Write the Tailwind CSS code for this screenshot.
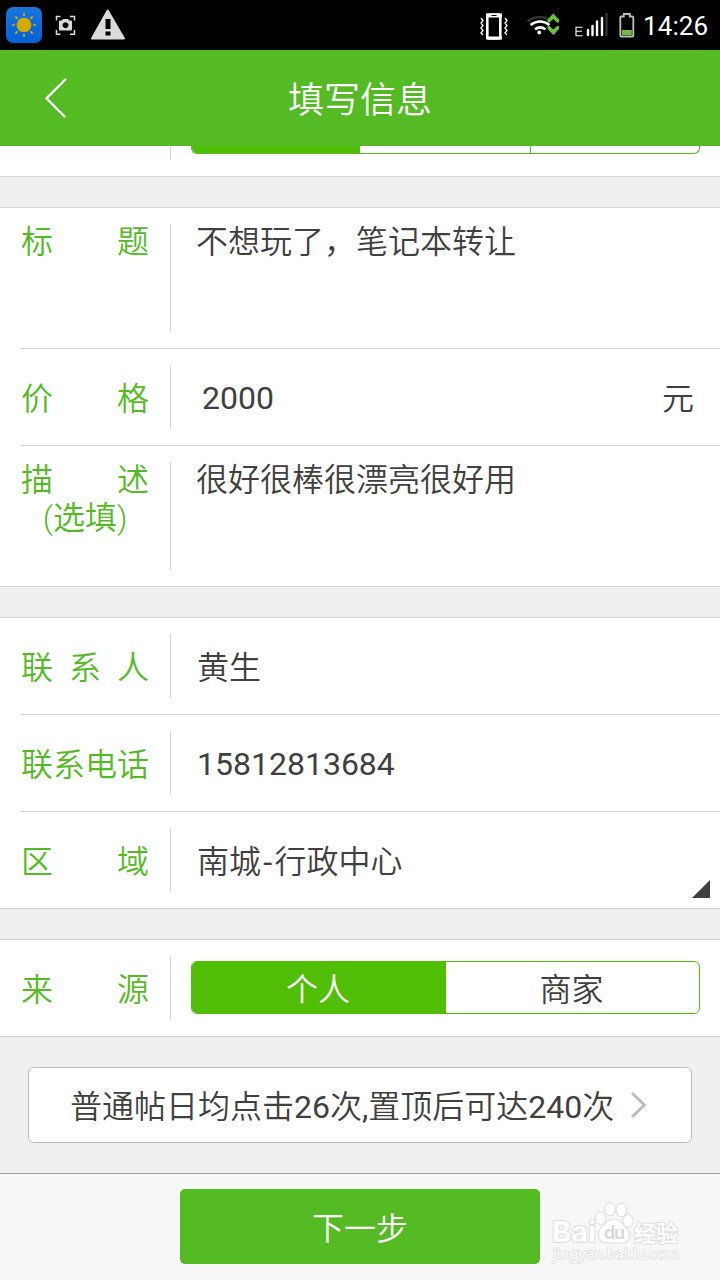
<!DOCTYPE html>
<html lang="zh-CN">
<head>
  <meta charset="UTF-8">
  <meta name="viewport" content="width=device-width, initial-scale=1">
  <title>填写信息</title>
  <script src="https://cdn.jsdelivr.net/npm/@tailwindcss/browser@4"></script>
</head>

<body class="w-[720px] h-[1280px] overflow-hidden flex flex-col bg-[#efefef] text-[#404040] text-[32px] leading-[38px] font-[350] font-[Roboto,'Noto_Sans_CJK_SC',sans-serif]">

<!-- Status Bar -->
<div class="h-[50px] shrink-0 bg-black flex items-center justify-between">
  <svg width="130" height="50" viewBox="0 0 130 50">
    <defs>
      <linearGradient id="sky" x1="0" y1="0" x2="0" y2="1">
        <stop offset="0" stop-color="#1a75dc"/>
        <stop offset="1" stop-color="#0062d8"/>
      </linearGradient>
    </defs>
    <rect x="6" y="7" width="36" height="36" rx="7" fill="url(#sky)"/>
    <circle cx="24" cy="25" r="7.3" fill="#d9a900"/>
    <path d="M24 13v3M24 34v3M12 25h3M33 25h3M15.3 16.3l2.4 2.4M30.3 31.3l2.4 2.4M15.3 33.7l2.4-2.4M30.3 18.7l2.4-2.4" stroke="#d9a900" stroke-width="1.7"/>
    <path d="M56.5 20.5v-4h4M70 16.5h4.5v4M74.500 30v4.200h-4.500M60.500 34.200h-4v-4.200" fill="none" stroke="#dadada" stroke-width="1.5"/>
    <path fill-rule="evenodd" d="M60 20.500h2l1-1.500h5l1 1.500h2q1 0 1 1v8q0 1-1 1h-11q-1 0-1-1v-8q0-1 1-1zM65.500 22.300a3 3 0 1 0 .01 0z" fill="#dadada"/>
    <path d="M107.700 10.500L124 38.500H92z" fill="#dadada" stroke="#dadada" stroke-width="2" stroke-linejoin="round"/>
    <path d="M105.500 19h5v10h-5zM105.500 31.500h5v4h-5z" fill="#000"/>
  </svg>
  <div class="flex items-center">
    <svg width="180" height="50" viewBox="0 0 180 50">
      <!-- vibrate -->
      <rect x="23.300" y="14.500" width="13" height="24" rx="1.500" fill="none" stroke="#fff" stroke-width="2.600"/>
      <path d="M22 13.500h16v4h-16zM22 36.500h16v3h-16z" fill="#fff"/>
      <path d="M27.500 15.500h5" stroke="#000" stroke-width="1"/>
      <path d="M17.500 18l2 2.500-2 2.500 2 2.500-2 2.500 2 2.500-2 2.500 2 2M41.500 18l2 2.500-2 2.500 2 2.500-2 2.500 2 2.500-2 2.500 2 2" transform="translate(-.5 0)" fill="none" stroke="#fff" stroke-width="1.300"/>
      <!-- wifi -->
      <path d="M63.500 21.500Q75 13.500 86 20" fill="none" stroke="#333" stroke-width="2.500"/>
      <path d="M66 25Q75.500 18 85 25M70.500 29.300Q75.500 25.500 81 29.300" transform="translate(.5 0)" fill="none" stroke="#fff" stroke-width="2.500"/>
      <circle cx="75.200" cy="32.500" r="1.900" fill="#fff"/>
      <path d="M83.500 22.500v-3l5.800-6 5.700 6v3h-2l-3.700-3.500-3.800 3.500zM83.500 26v3l5.800 6 5.700-6v-3h-2l-3.700 3.500-3.800-3.500z" fill="#6cc035"/>
      <!-- signal -->
      <path d="M118.500 27.200h-6.500v8.500h6.500M112 31.200h6" fill="none" stroke="#fff" stroke-width="1.100"/>
      <path d="M124 30v5M128.500 26v9M133 21.500v13.500M138 18v17" stroke="#fff" stroke-width="2.400" stroke-linecap="round"/>
      <path d="M142.500 13v23" stroke="#333" stroke-width="2.400"/>
      <!-- battery -->
      <path d="M156.500 17.500q0-1 1-1h2.500v-2.500h6v2.500h2.500q1 0 1 1v18q0 1-1 1h-11q-1 0-1-1z" transform="translate(-.2 0)" fill="none" stroke="#bdbdbd" stroke-width="1.800"/>
      <path d="M157.800 30h10v5h-10z" fill="#6cc035"/>
    </svg>
    <span class="w-[77px] -ml-[1px] pt-0.5 text-[26px] text-white tracking-[0.1px] font-normal">14:26</span>
  </div>
</div>

<!-- Header -->
<header class="h-24 shrink-0 bg-[#54bb24] text-white flex items-center">
  <svg class="w-[110px]" height="96" viewBox="0 0 110 96" fill="none" stroke="#fff" stroke-width="2.400" stroke-linecap="round">
    <path d="M65.300 29.500L46.500 48.300 64.500 66.500"/>
  </svg>
  <h1 class="flex-1 pr-[110px] pt-[5px] text-center text-[36px] font-[350]">填写信息</h1>
</header>

<!-- Scrolled row -->
<section class="h-[31px] shrink-0 bg-white border-b border-[#d6d6d6] flex items-start">
  <div class="ml-[170px] w-px h-[14px] bg-[#d6d6d6]"></div>
  <div class="ml-5 w-[509px] h-2 rounded-b-[6px] border border-t-0 border-[#52bd25] flex overflow-hidden">
    <div class="w-[168px] bg-[#50be04]"></div>
    <div class="w-[171px] border-r border-[#52bd25]"></div>
  </div>
</section>

<!-- Item info -->
<section class="mt-[30px] shrink-0 bg-white border-y border-[#d6d6d6]">
  <div class="h-[140px] py-4 flex">
    <div class="w-[170px] px-[21px] flex justify-between text-[#54bb24] -mt-px"><span>标</span><span>题</span></div>
    <div class="w-px bg-[#d6d6d6]"></div>
    <div class="pl-[25px] -mt-px">不想玩了，笔记本转让</div>
  </div>
  <div class="ml-5 h-[98px] py-4 border-y border-[#d6d6d6] flex">
    <div class="w-[150px] pl-px pr-[21px] pt-1 flex justify-between items-center text-[#54bb24]"><span>价</span><span>格</span></div>
    <div class="w-px bg-[#d6d6d6]"></div>
    <div class="flex-1 pl-[31px] pr-[26px] flex justify-between items-center"><span class="pt-0.5 font-normal">2000</span><span class="pt-1">元</span></div>
  </div>
  <div class="h-[140px] py-4 flex">
    <div class="w-[170px] px-[21px] text-[#54bb24] -mt-px">
      <div class="flex justify-between"><span>描</span><span>述</span></div>
      <div class="text-center">(选填)</div>
    </div>
    <div class="w-px bg-[#d6d6d6]"></div>
    <div class="pl-[25px] -mt-px">很好很棒很漂亮很好用</div>
  </div>
</section>

<!-- Contact info -->
<section class="mt-[30px] shrink-0 bg-white border-y border-[#d6d6d6]">
  <div class="h-24 py-4 flex">
    <div class="w-[170px] px-[21px] pt-1 flex justify-between items-center text-[#54bb24]"><span>联</span><span>系</span><span>人</span></div>
    <div class="w-px bg-[#d6d6d6]"></div>
    <div class="pl-[26px] pt-1 flex items-center">黄生</div>
  </div>
  <div class="ml-5 h-[98px] py-4 border-y border-[#d6d6d6] flex">
    <div class="w-[150px] pl-px pt-1 flex items-center text-[#54bb24]">联系电话</div>
    <div class="w-px bg-[#d6d6d6]"></div>
    <div class="pl-[26px] pt-0.5 flex items-center font-normal">15812813684</div>
  </div>
  <div class="h-24 flex">
    <div class="w-[170px] px-[21px] pt-1 flex justify-between items-center text-[#54bb24]"><span>区</span><span>域</span></div>
    <div class="my-4 w-px bg-[#d6d6d6]"></div>
    <div class="flex-1 pl-[26px] pt-1 flex items-center"><p>南城<span class="inline-block w-[13.500px] text-center font-normal">-</span>行政中心</p></div>
    <svg class="self-end mr-[10px] mb-[10px]" width="18" height="18" viewBox="0 0 18 18"><path d="M0 18L18 0v18z" fill="#404040"/></svg>
  </div>
</section>

<!-- Source -->
<section class="mt-[30px] h-[98px] shrink-0 bg-white border-y border-[#d6d6d6] flex">
  <div class="w-[170px] px-[21px] pt-1 flex justify-between items-center text-[#54bb24]"><span>来</span><span>源</span></div>
  <div class="my-4 w-px bg-[#d6d6d6]"></div>
  <div class="ml-5 mt-[21px] w-[509px] h-[53px] rounded-[6px] border border-[#50be04] bg-white flex overflow-hidden">
    <div class="w-[254px] pt-1 pr-0.5 bg-[#50be04] text-white flex items-center justify-center">个人</div>
    <div class="flex-1 pt-1 pr-0.5 flex items-center justify-center">商家</div>
  </div>
</section>

<!-- Promotion -->
<div class="mx-7 mt-[30px] h-[76px] shrink-0 pl-[41px] bg-white border border-[#bdbdbd] rounded-[6px] flex items-center">
  <p class="w-[560px] pt-[3px] whitespace-nowrap">普通帖日均点击<span class="font-normal">26</span>次<span class="font-normal">,</span>置顶后可达<span class="font-normal">240</span>次</p>
  <svg width="18" height="28" viewBox="0 0 18 28" fill="none" stroke="#bdbdbd" stroke-width="3"><path d="M2 2L14.300 14 2 26"/></svg>
</div>

<!-- Footer -->
<footer class="mt-[30px] h-[107px] shrink-0 relative border-t border-[#a0a0a0] bg-[#f7f7f7] flex justify-center">
  <button class="mt-[15px] w-[360px] h-[75px] pt-1 rounded-[5px] bg-[#54bb24] text-white font-[350]">下一步</button>
  <svg class="absolute right-[36px] top-[24px]" width="136" height="68" viewBox="548 1198 136 68">
    <g fill="#fff" stroke="#dedede" stroke-width="2" paint-order="stroke" stroke-linejoin="round">
      <text x="552" y="1242" font-family="Inter, sans-serif" font-weight="700" font-size="29" textLength="44">Bai</text>
      <ellipse cx="600.500" cy="1218" rx="4.800" ry="6"/>
      <ellipse cx="610" cy="1209" rx="4.800" ry="6.300"/>
      <ellipse cx="621.500" cy="1210" rx="4.800" ry="6.300"/>
      <ellipse cx="628" cy="1221" rx="4.600" ry="6"/>
      <path d="M614.500 1219.500c6 0 8 6 12 9.500 4.500 4 3.500 13-4 13.500h-16c-8-.5-10-9-5-14 4-4 6-9 13-9z"/>
      <text x="634" y="1241" font-family="'Noto Sans CJK SC', sans-serif" font-weight="700" font-size="22" textLength="44">经验</text>
      <text x="553" y="1259" font-family="'Noto Sans', sans-serif" font-weight="400" font-size="15" textLength="126" stroke-width="1.500">jingyan.baidu.com</text>
    </g>
    <text x="604" y="1239" font-family="Inter, sans-serif" font-weight="600" font-size="18" fill="#d8d8d8" textLength="21">du</text>
  </svg>
</footer>

</body>
</html>
